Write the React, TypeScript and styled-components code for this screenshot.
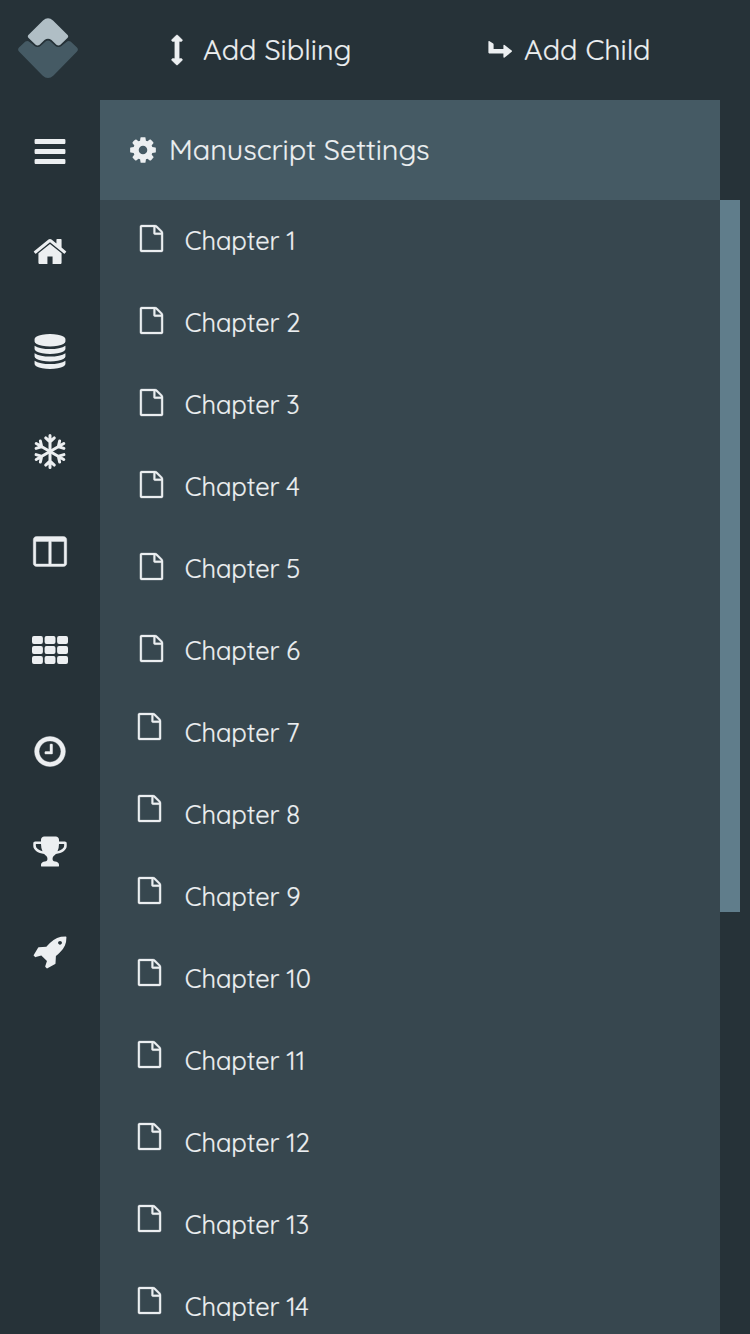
import React from 'react';
import styled, { createGlobalStyle } from 'styled-components';

const GlobalStyle = createGlobalStyle`
  * { box-sizing: border-box; }
  html, body { margin: 0; padding: 0; background: #263238; }
  body { overflow: hidden; }
`;

const Shell = styled.div`
  display: grid;
  grid-template-columns: 100px 1fr;
  width: 750px;
  height: 1334px;
  overflow: hidden;
  background: #263238;
  color: #eceff1;
  font-family: Quicksand, Lato, 'Open Sans', sans-serif;
  font-weight: 400;
  -webkit-text-stroke: 0.2px #eceff1;
`;

const Sidebar = styled.nav`
  display: flex;
  flex-direction: column;
`;

const LogoLink = styled.div`
  height: 100px;
  padding: 17px 0 0 17px;
  svg { display: block; }
`;

const NavButton = styled.div`
  display: flex;
  align-items: center;
  justify-content: center;
  height: 100px;
  padding-top: 3px;
`;

const Main = styled.main`
  display: flex;
  flex-direction: column;
  min-width: 0;
  min-height: 0;
`;

const Toolbar = styled.header`
  display: flex;
  height: 100px;
  flex: none;
`;

const ToolButton = styled.div<{ $pad: number }>`
  display: flex;
  align-items: center;
  width: 310px;
  padding-left: ${p => p.$pad}px;
  padding-bottom: 1px;
  gap: 11px;
  font-size: 28.8px;
  white-space: nowrap;
`;

const BarLabel = styled.span`
  padding-bottom: 2px;
`;

const Content = styled.div`
  display: flex;
  flex: 1;
  min-height: 0;
`;

const Panel = styled.section`
  width: 620px;
  background: #37474f;
`;

const PanelHeader = styled.div`
  display: flex;
  align-items: center;
  gap: 11px;
  height: 100px;
  padding: 0 0 1px 28px;
  background: #455a64;
  font-size: 28.75px;
`;

const Track = styled.div`
  width: 20px;
  padding-top: 100px;
`;

const Thumb = styled.div`
  height: 712px;
  background: #607d8b;
`;

const Row = styled.div`
  display: flex;
  align-items: center;
  height: 82px;
`;

const RowIcon = styled.span<{ $raised: boolean }>`
  display: flex;
  width: 84.8px;
  padding-left: ${p => (p.$raised ? 36 : 38)}px;
  padding-bottom: ${p => (p.$raised ? 13 : 5)}px;
`;

const RowLabel = styled.span`
  padding-bottom: 3px;
  font-size: 25.6px;
  letter-spacing: -0.08px;
`;

type GlyphProps = { d: string; size: number; height?: number; bold?: number };

const Glyph = ({ d, size, height = size, bold = 0 }: GlyphProps) => (
  <svg
    width={size}
    height={height}
    viewBox="0 0 1792 1792"
    preserveAspectRatio="none"
    fill="currentColor"
    stroke="currentColor"
    strokeWidth={bold}
    overflow="visible"
  >
    <path d={d} />
  </svg>
);

const bars =
  'M1664 1344v128q0 26-19 45t-45 19h-1408q-26 0-45-19t-19-45v-128q0-26 19-45t45-19h1408q26 0 45 19t19 45zm0-512v128q0 26-19 45t-45 19h-1408q-26 0-45-19t-19-45v-128q0-26 19-45t45-19h1408q26 0 45 19t19 45zm0-512v128q0 26-19 45t-45 19h-1408q-26 0-45-19t-19-45v-128q0-26 19-45t45-19h1408q26 0 45 19t19 45z';
const home =
  'M1472 992v480q0 26-19 45t-45 19h-384v-384h-256v384h-384q-26 0-45-19t-19-45v-480q0-1 .5-3t.5-3l575-474 575 474q1 2 1 6zm223-69l-62 74q-8 9-21 11h-3q-13 0-21-7l-692-577-692 577q-12 8-24 7-13-2-21-11l-62-74q-8-10-7-23.5t11-21.5l719-599q32-26 76-26t76 26l244 204v-195q0-14 9-23t23-9h192q14 0 23 9t9 23v408l219 182q10 8 11 21.5t-7 23.5z';
const database =
  'M896 768q237 0 443-43t325-127v170q0 69-103 128t-280 93.5-385 34.5-385-34.5-280-93.5-103-128v-170q119 84 325 127t443 43zm0 768q237 0 443-43t325-127v170q0 69-103 128t-280 93.5-385 34.5-385-34.5-280-93.5-103-128v-170q119 84 325 127t443 43zm0-384q237 0 443-43t325-127v170q0 69-103 128t-280 93.5-385 34.5-385-34.5-280-93.5-103-128v-170q119 84 325 127t443 43zm0-1152q208 0 385 34.5t280 93.5 103 128v128q0 69-103 128t-280 93.5-385 34.5-385-34.5-280-93.5-103-128v-128q0-69 103-128t280-93.5 385-34.5z';
const columns =
  'M224 1536h608v-1152h-640v1120q0 13 9.5 22.5t22.5 9.5zm1376-32v-1120h-640v1152h608q13 0 22.5-9.5t9.5-22.5zm128-1216v1216q0 66-47 113t-113 47h-1344q-66 0-113-47t-47-113v-1216q0-66 47-113t113-47h1344q66 0 113 47t47 113z';
const clock =
  'M1024 544v448q0 14-9 23t-23 9h-320q-14 0-23-9t-9-23v-64q0-14 9-23t23-9h224v-352q0-14 9-23t23-9h64q14 0 23 9t9 23zm416 352q0-148-73-273t-198-198-273-73-273 73-198 198-73 273 73 273 198 198 273 73 273-73 198-198 73-273zm224 0q0 209-103 385.5t-279.5 279.5-385.5 103-385.5-103-279.5-279.5-103-385.5 103-385.5 279.5-279.5 385.5-103 385.5 103 279.5 279.5 103 385.5z';
const trophy =
  'M522 883q-74-162-74-371h-256v96q0 78 94.5 162t235.5 113zm1078-275v-96h-256q0 209-74 371 141-29 235.5-113t94.5-162zm128-128v128q0 71-41.5 143t-112 130-173 97.5-215.5 44.5q-42 54-95 95-38 34-52.5 72.5t-14.5 89.5q0 54 30.5 91t97.5 37q75 0 133.5 45.5t58.5 114.5v64q0 14-9 23t-23 9h-832q-14 0-23-9t-9-23v-64q0-69 58.5-114.5t133.5-45.5q67 0 97.5-37t30.5-91q0-51-14.5-89.5t-52.5-72.5q-53-41-95-95-113-5-215.5-44.5t-173-97.5-112-130-41.5-143v-128q0-40 28-68t68-28h288v-96q0-66 47-113t113-47h576q66 0 113 47t47 113v96h288q40 0 68 28t28 68z';
const rocket =
  'M1490 448q0-40-28-68t-68-28-68 28-28 68 28 68 68 28 68-28 28-68zm224-288q0 249-75.5 430.5t-253.5 360.5q-81 80-195 176l-20 379q-2 16-16 26l-384 224q-7 4-16 4-12 0-23-9l-64-64q-13-14-8-32l85-276-281-281-276 85q-3 1-9 1-14 0-23-9l-64-64q-17-19-5-39l224-384q10-14 26-16l379-20q96-114 176-195 188-187 358-258t431-71q14 0 24 9.5t10 22.5z';
const cog =
  'M1152 896q0-106-75-181t-181-75-181 75-75 181 75 181 181 75 181-75 75-181zm512-109v222q0 12-8 23t-20 13l-185 28q-19 54-39 91 35 50 107 138 10 12 10 25t-9 23q-27 37-99 108t-94 71q-12 0-26-9l-138-108q-44 23-91 38-16 136-29 186-7 28-36 28h-222q-14 0-24.5-8.5t-11.5-21.5l-28-184q-49-16-90-37l-141 107q-10 9-25 9-14 0-25-11-126-114-165-168-7-10-7-23 0-12 8-23 15-21 51-66.5t54-70.5q-27-50-41-99l-183-27q-13-2-21-12.5t-8-23.5v-222q0-12 8-23t19-13l186-28q14-46 39-92-40-57-107-138-10-12-10-24 0-10 9-23 26-36 98.5-107.5t94.5-71.5q13 0 26 10l138 107q44-23 91-38 16-136 29-186 7-28 36-28h222q14 0 24.5 8.5t11.5 21.5l28 184q49 16 90 37l142-107q9-9 24-9 13 0 25 10 129 119 165 170 7 8 7 22 0 12-8 23-15 21-51 66.5t-54 70.5q26 50 41 98l183 28q13 2 21 12.5t8 23.5z';
const file =
  'M1596 380q28 28 48 76t20 88v1152q0 40-28 68t-68 28h-1344q-40 0-68-28t-28-68v-1600q0-40 28-68t68-28h896q40 0 88 20t76 48zm-444-244v376h376q-10-29-22-41l-313-313q-12-12-41-22zm384 1528v-1024h-416q-40 0-68-28t-28-68v-416h-768v1536h1280z';
const arrowsV =
  'M1216 320q0 26-19 45t-45 19h-128v1024h128q26 0 45 19t19 45-19 45l-256 256q-19 19-45 19t-45-19l-256-256q-19-19-19-45t19-45 45-19h128v-1024h-128q-26 0-45-19t-19-45 19-45l256-256q19-19 45-19t45 19l256 256q19 19 19 45z';

const Snowflake = () => (
  <svg width="36" height="35" viewBox="-18 -17.5 36 35" fill="none" stroke="currentColor" strokeWidth="3" strokeLinecap="round">
    {[0, 60, 120, 180, 240, 300].map(a => (
      <path key={a} transform={`rotate(${a})`} d="M0 0V-15.9M-4.3 -13.6L0 -9.6L4.3 -13.6" />
    ))}
  </svg>
);

const Grid = () => (
  <svg width="36" height="35" viewBox="0 0 36 35" fill="currentColor">
    {[2, 12, 22].map(y =>
      [0, 12.6, 25.1].map(x => <rect key={`${x}-${y}`} x={x} y={y} width="10.9" height="8" rx="1.9" />)
    )}
  </svg>
);

const ChildArrow = () => (
  <svg width="25" height="20" viewBox="0 0 25 20" fill="currentColor">
    <path d="M.4 1.6Q.4.8 1.2 1L5.2 3.6Q5.6 3.9 5.6 4.5V9H15.4V5.6Q15.5 4.4 16.6 5L23.7 10.6Q24.3 11.2 23.7 11.8L16.6 17.6Q15.5 18.2 15.4 17V13.4H1.2Q.4 13.4.4 12.6Z" />
  </svg>
);

const Logo = () => (
  <svg width="62" height="62" viewBox="0 0 62 62">
    <path
      fill="#455a64"
      d="M8.4 24.6Q10.6 23 12.6 25L17.6 29Q20.5 31 23.5 29L28.5 24.6Q31 22.6 33.5 24.6L38.5 29Q41.5 31 44.4 29L49.4 25Q51.4 23 53.6 24.6L60 30.6Q61.8 32.6 60 34.6L36.5 58.4Q31 63.4 25.5 58.4L2 34.6Q.2 32.6 2 30.6Z"
    />
    <path
      fill="#b0bec5"
      stroke="#263238"
      strokeWidth="2.6"
      paintOrder="stroke"
      d="M11.6 17.8L26 3.4Q31 -1 36 3.4L50.4 17.8Q52 19.4 50.4 21L43.4 27.8Q41.5 29.4 39.4 27.8L34.5 23Q31 20.4 27.5 23L22.6 27.8Q20.5 29.4 18.6 27.8L11.6 21Q10 19.4 11.6 17.8Z"
    />
  </svg>
);

const navIcons = [
  <Glyph d={bars} size={36} height={35} />,
  <Glyph d={home} size={36} height={35} />,
  <Glyph d={database} size={36} height={35} />,
  <Snowflake />,
  <Glyph d={columns} size={36} height={35} bold={20} />,
  <Grid />,
  <Glyph d={clock} size={36} height={35} bold={20} />,
  <Glyph d={trophy} size={36} height={35} />,
  <Glyph d={rocket} size={36} height={35} />,
];

const chapters = Array.from({ length: 14 }, (_, i) => i + 1);

export default function App() {
  return (
    <Shell>
      <GlobalStyle />
      <Sidebar>
        <LogoLink>
          <Logo />
        </LogoLink>
        {navIcons.map((icon, i) => (
          <NavButton key={i}>{icon}</NavButton>
        ))}
      </Sidebar>
      <Main>
        <Toolbar>
          <ToolButton $pad={62}>
            <Glyph d={arrowsV} size={30} bold={30} />
            <BarLabel>Add Sibling</BarLabel>
          </ToolButton>
          <ToolButton $pad={78}>
            <ChildArrow />
            <BarLabel>Add Child</BarLabel>
          </ToolButton>
        </Toolbar>
        <Content>
          <Panel>
            <PanelHeader>
              <Glyph d={cog} size={30} />
              <BarLabel>Manuscript Settings</BarLabel>
            </PanelHeader>
            {chapters.map(n => (
              <Row key={n}>
                <RowIcon $raised={n > 6}>
                  <Glyph d={file} size={27} bold={20} />
                </RowIcon>
                <RowLabel>Chapter {n}</RowLabel>
              </Row>
            ))}
          </Panel>
          <Track>
            <Thumb />
          </Track>
        </Content>
      </Main>
    </Shell>
  );
}
